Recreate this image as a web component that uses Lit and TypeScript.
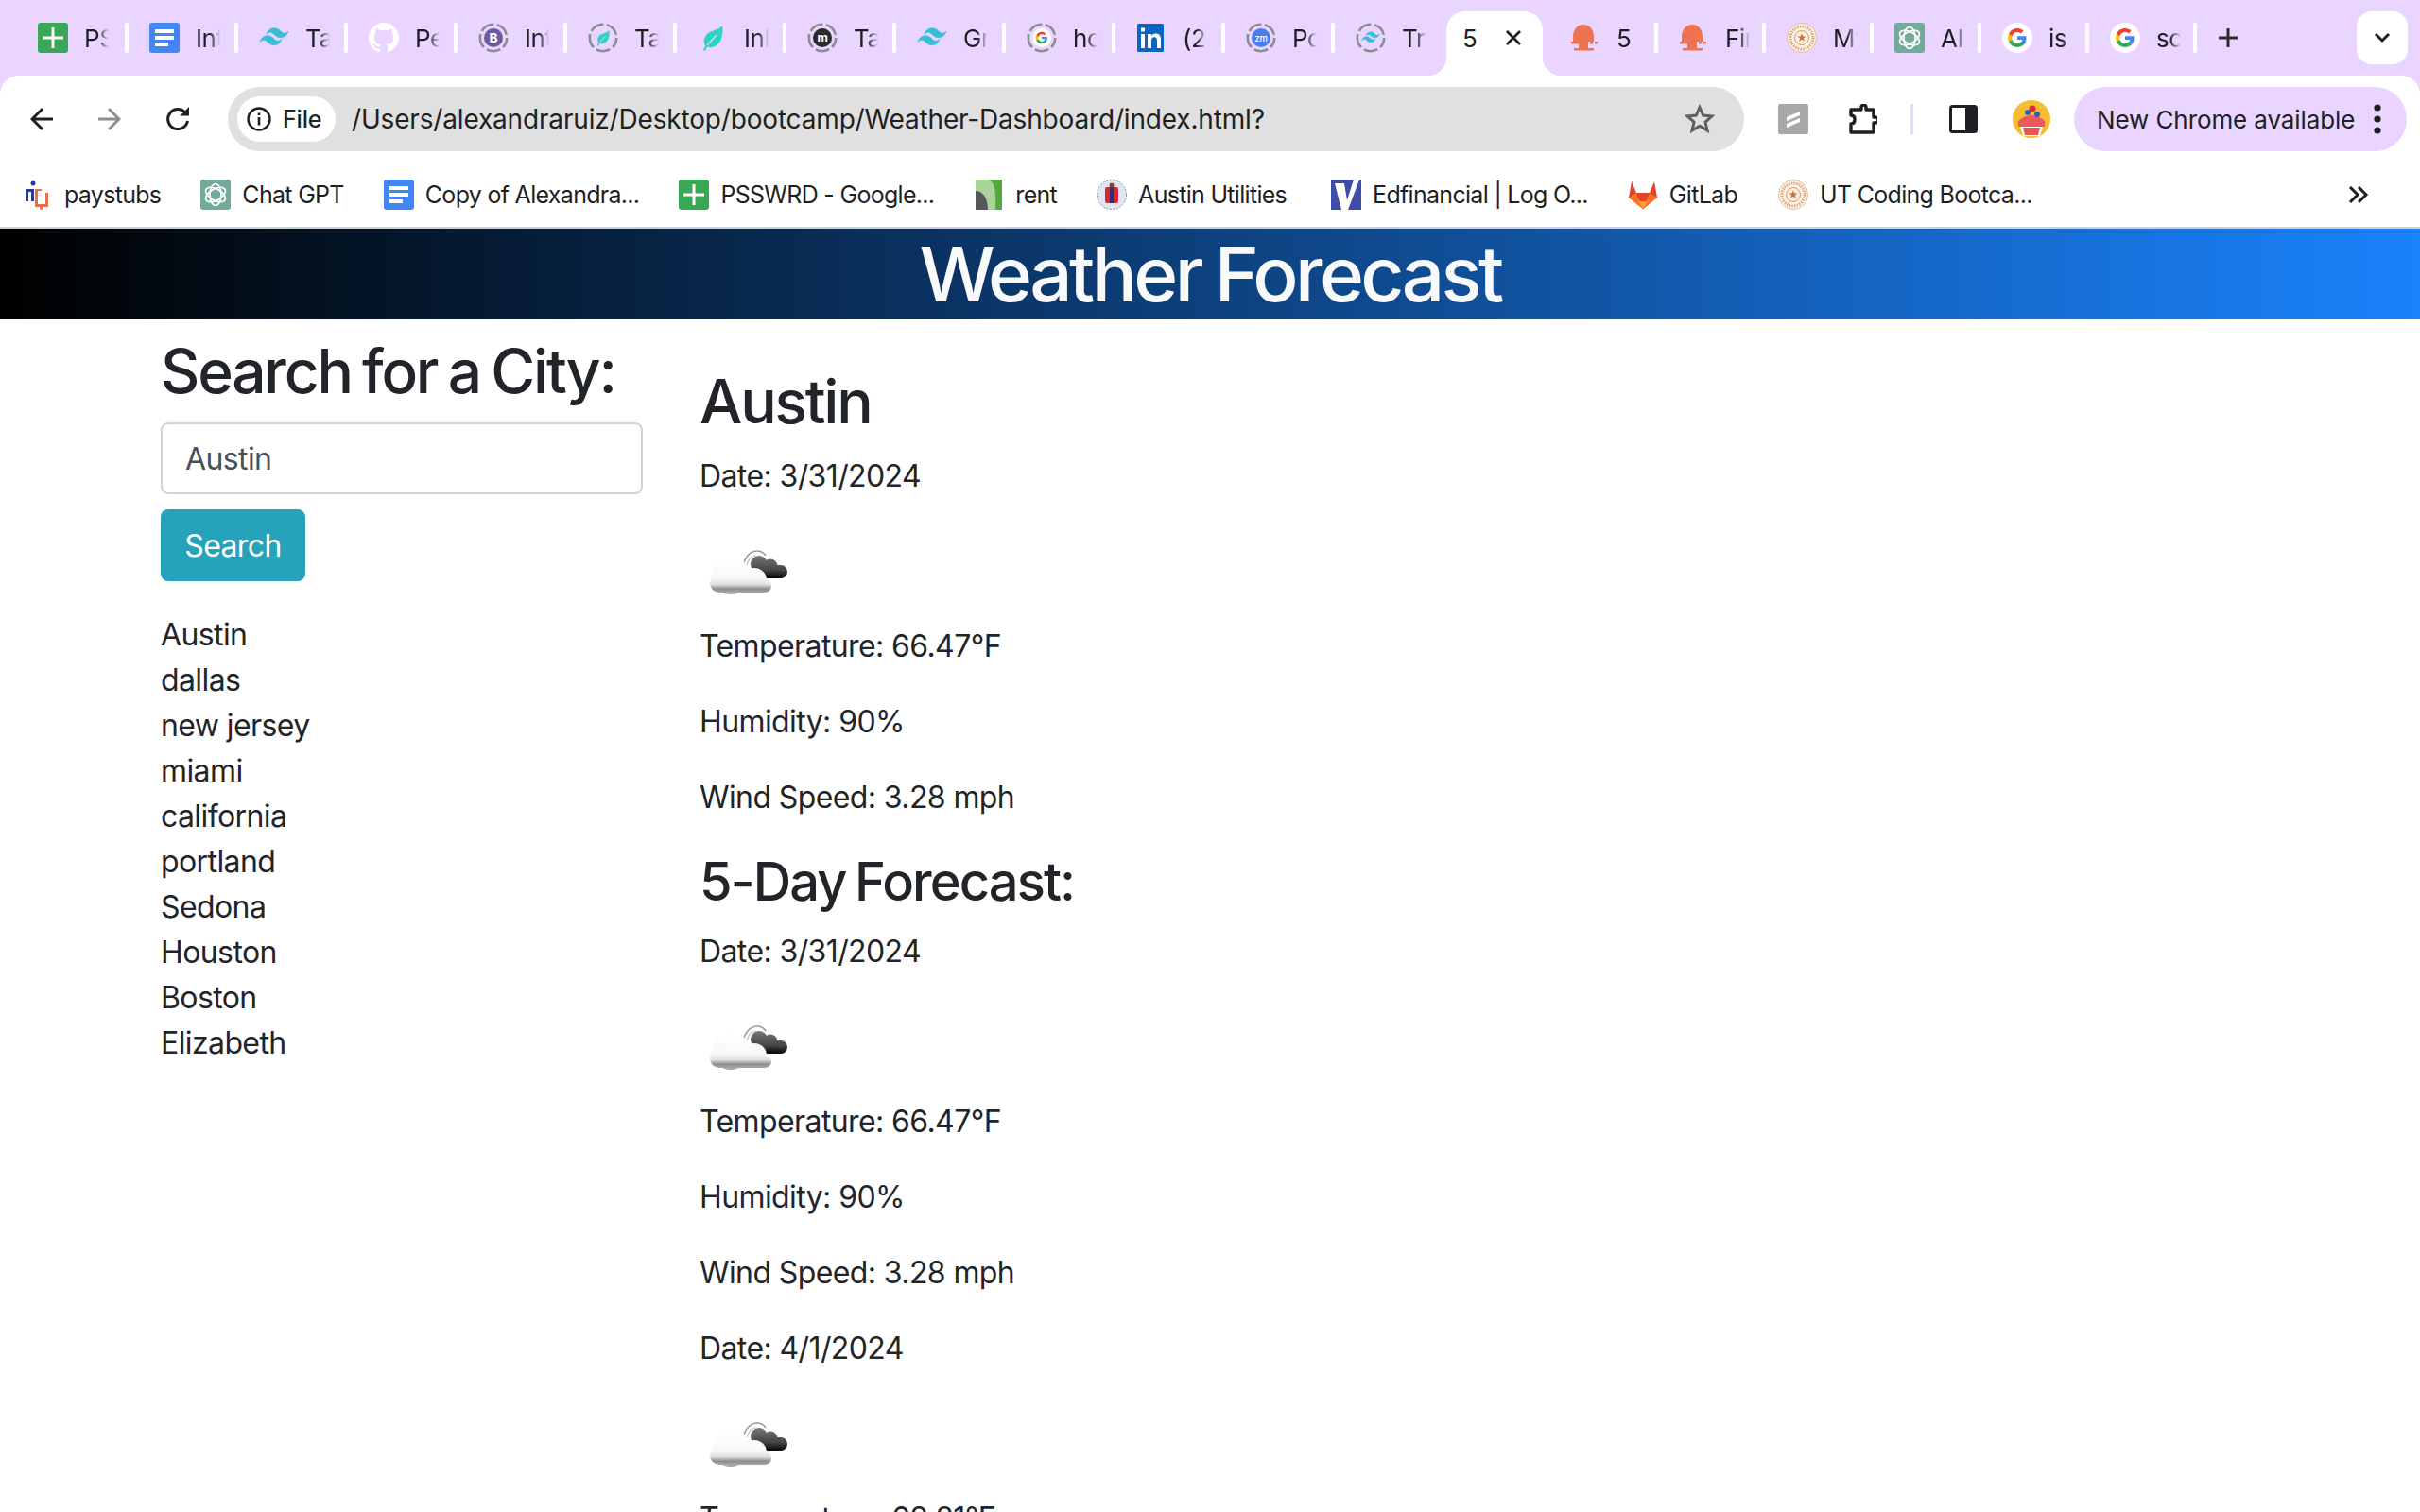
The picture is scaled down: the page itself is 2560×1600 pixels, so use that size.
import { LitElement, html, css, svg } from 'lit';
import { customElement } from 'lit/decorators.js';

const GITHUB = 'M8 0C3.58 0 0 3.58 0 8c0 3.54 2.29 6.53 5.47 7.59.4.07.55-.17.55-.38 0-.19-.01-.82-.01-1.49-2.01.37-2.53-.49-2.69-.94-.09-.23-.48-.94-.82-1.13-.28-.15-.68-.52-.01-.53.63-.01 1.08.58 1.23.82.72 1.21 1.87.87 2.33.66.07-.52.28-.87.51-1.07-1.78-.2-3.64-.89-3.64-3.95 0-.87.31-1.59.82-2.15-.08-.2-.36-1.02.08-2.12 0 0 .67-.21 2.2.82.64-.18 1.32-.27 2-.27s1.36.09 2 .27c1.53-1.04 2.2-.82 2.2-.82.44 1.1.16 1.92.08 2.12.51.56.82 1.27.82 2.15 0 3.07-1.87 3.75-3.65 3.95.29.25.54.73.54 1.48 0 1.07-.01 1.93-.01 2.2 0 .21.15.46.55.38A8.01 8.01 0 0016 8c0-4.42-3.58-8-8-8z';
const WAVE = 'M8 12.500c1.300-4.500 4-6.700 8-6.700 6 0 6.700 4.500 9.700 5.300 2 .5 3.800-.2 5.300-2.100-1.300 4.500-4 6.700-8 6.700-6 0-6.700-4.500-9.700-5.300-2-.5-3.800.2-5.300 2.100zM1 20.500c1.300-4.500 4-6.700 8-6.700 6 0 6.700 4.500 9.700 5.300 2 .5 3.800-.2 5.300-2.100-1.300 4.500-4 6.700-8 6.700-6 0-6.700-4.500-9.700-5.300-2-.5-3.800.2-5.300 2.100z';
const LEAF = 'M26 3c1.500 9-.5 17-6 21-3 2.200-7 2.700-10 1.500L8 30l-2-1 2.300-4.800C5 20 7 13 13 10c5-2.500 10-3 13-7z';

const box = (inner: unknown) => html`<svg class="ico" viewBox="0 0 32 32">${inner}</svg>`;
// sleeping tabs get a dashed grey ring round a smaller favicon
const ring = (inner: unknown) => box(svg`
  <circle cx="16" cy="16" r="14.200" fill="none" stroke="#8b8b90" stroke-width="2.600" stroke-dasharray="15 3.600" stroke-dashoffset="4"/>
  <g transform="translate(6 6) scale(.625)">${inner}</g>`);

const sheetsArt = svg`<rect x="0" width="32" height="32" rx="3" fill="#3aa757"/><path d="M14.500 5h3v9.500H27v3h-9.500V27h-3v-9.500H5v-3h9.500z" fill="#fff"/>`;
const docsArt = svg`<rect width="32" height="32" rx="3" fill="#4285f4"/><path d="M6 7h20v4H6zM6 14h20v4H6zM6 21h14v4H6z" fill="#fff"/>`;
const windArt = svg`<path d=${WAVE} fill="#38bdd8" stroke="#38bdd8" stroke-width=".6"/>`;
const leafArt = svg`<path d=${LEAF} fill="#2dd4c4"/><path d="M10 24l10-11" stroke="#e9d5ff" stroke-width="1.200"/>`;
const googleArt = svg`
  <circle cx="16" cy="16" r="16" fill="#fff"/>
  <path d="M25.500 16.300c0-.7-.1-1.400-.2-2H16v3.800h5.400c-.2 1.200-.9 2.300-2 3v2.500h3.200c1.800-1.700 2.900-4.200 2.900-7.300z" fill="#4285f4"/>
  <path d="M16 26c2.700 0 4.900-.9 6.600-2.400l-3.200-2.500c-.9.600-2 1-3.400 1-2.600 0-4.800-1.800-5.600-4.100H7.100v2.600C8.700 23.800 12.100 26 16 26z" fill="#34a853"/>
  <path d="M10.400 18c-.4-1.200-.4-2.600 0-3.800v-2.600H7.100c-1.400 2.800-1.400 6.200 0 9z" fill="#fbbc05"/>
  <path d="M16 9.900c1.500 0 2.800.5 3.800 1.500l2.800-2.800C20.900 7 18.700 6 16 6c-3.900 0-7.300 2.200-8.900 5.600l3.300 2.600c.8-2.400 3-4.300 5.600-4.300z" fill="#ea4335"/>`;
const gptArt = svg`
  <rect width="32" height="32" rx="3" fill="#74aa9c"/>
  <g fill="none" stroke="#fff" stroke-width="1.700">
    <ellipse cx="16" cy="16" rx="6" ry="11.500"/>
    <ellipse cx="16" cy="16" rx="6" ry="11.500" transform="rotate(60 16 16)"/>
    <ellipse cx="16" cy="16" rx="6" ry="11.500" transform="rotate(120 16 16)"/>
  </g>`;
const sealArt = svg`
  <circle cx="16" cy="16" r="15.500" fill="#fdf3e7" stroke="#e0bd9b" stroke-width="1"/>
  <circle cx="16" cy="16" r="12" fill="none" stroke="#d8a77c" stroke-width="3" stroke-dasharray="1.500 1.200"/>
  <circle cx="16" cy="16" r="7.500" fill="#fbeee0" stroke="#cf9a6e"/>
  <path d="M16 11.500l1.300 3h3.200l-2.600 2 1 3.200-2.900-1.900-2.900 1.900 1-3.200-2.600-2h3.200z" fill="#c8733c"/>`;
const bellArt = svg`
  <path d="M14 2c7 0 11 6 11 13v5H3v-5C3 8 7 2 14 2z" fill="#ee7350"/>
  <path d="M1 20h18v2.500H1zM21 20h3v2.500h-3zM26 20h3v2.500h-3zM9 22.500h10V27h6v2.500H4V27h5z" fill="#ee7350"/>`;
const linkedinArt = svg`
  <rect x="1" y="1" width="28" height="30" rx="1.500" fill="#0a66c2"/>
  <path d="M5 12h4v15H5zM5 5.500h4v4H5zM12 12h4v2c1-1.500 2.500-2.400 4.500-2.400 4 0 5.500 2.600 5.500 6.400v9h-4v-8c0-2.300-.7-3.800-2.800-3.800-2 0-3.200 1.500-3.200 3.800v8h-4z" fill="#fff"/>`;
const bootstrapArt = svg`
  <circle cx="16" cy="16" r="16" fill="#6f5a9f"/>
  <text x="16" y="24" text-anchor="middle" font-family="Inter, sans-serif" font-size="22" font-weight="700" fill="#fff">B</text>`;
const miroArt = svg`
  <circle cx="16" cy="16" r="16" fill="#2a2a30"/>
  <text x="16" y="23" text-anchor="middle" font-family="Inter, sans-serif" font-size="20" font-weight="700" fill="#fff">m</text>`;
const zoomArt = svg`
  <circle cx="16" cy="16" r="16" fill="#4a7df0"/>
  <text x="16" y="22" text-anchor="middle" font-family="Inter, sans-serif" font-size="15" font-weight="500" fill="#fff">zm</text>`;

interface Tab { label: string; icon: unknown; w: number; pad?: number; sep?: boolean; }

const TABS_LEFT: Tab[] = [
  { label: 'PSSWRD', icon: box(sheetsArt), w: 116, pad: 20, sep: true },
  { label: 'Interview', icon: box(docsArt), w: 116, sep: true },
  { label: 'Tailwind', icon: box(windArt), w: 116, sep: true },
  { label: 'Pets', icon: box(svg`<path transform="scale(2)" d=${GITHUB} fill="#fff"/>`), w: 116, sep: true },
  { label: 'Intro', icon: ring(bootstrapArt), w: 116, sep: true },
  { label: 'Tailwind', icon: ring(leafArt), w: 116, sep: true },
  { label: 'Inbox', icon: box(leafArt), w: 116, sep: true },
  { label: 'Tasks', icon: ring(miroArt), w: 116, sep: true },
  { label: 'Grid', icon: box(windArt), w: 116, sep: true },
  { label: 'how', icon: ring(googleArt), w: 116, sep: true },
  { label: '(2)', icon: box(linkedinArt), w: 116, sep: true },
  { label: 'Portal', icon: ring(zoomArt), w: 116, sep: true },
  { label: 'Tr', icon: ring(windArt), w: 118 },
];

const TABS_RIGHT: Tab[] = [
  { label: '5', icon: box(bellArt), w: 122, pad: 29, sep: true },
  { label: 'Find', icon: box(bellArt), w: 114, sep: true },
  { label: 'MyUT', icon: box(sealArt), w: 114, sep: true },
  { label: 'AI', icon: box(gptArt), w: 114, sep: true },
  { label: 'is', icon: box(googleArt), w: 114, sep: true },
  { label: 'sc', icon: box(googleArt), w: 114, sep: true },
];

const payIcon = box(svg`
  <circle cx="11" cy="4" r="2.500" fill="#2438a8"/>
  <path d="M3 10h9v13H9V13H6v10H3z" fill="#2438a8"/>
  <path d="M13 10h7v2h-4v14h8V14h3v15H13z" fill="#ee6a4d"/>
  <circle cx="20" cy="30" r="2" fill="#ee6a4d"/>`);
const rentIcon = box(svg`
  <rect x="2" width="28" height="32" fill="#55a83f"/>
  <path d="M2 0h14c6 2 8 14 7 32H2z" fill="#a9d49a"/>
  <path d="M2 12c8 0 13 8 13 20H2z" fill="#55585a"/>`);
const austinIcon = box(svg`
  <circle cx="16" cy="16" r="15.500" fill="#dfe6ee" stroke="#7d93ad" stroke-dasharray="2 1.500"/>
  <rect x="9" y="8" width="14" height="17" rx="2" fill="#d6263c"/>
  <path d="M14 8h4v17h-4z" fill="#27346e"/>
  <circle cx="16" cy="6" r="2.500" fill="#7a4a2a"/>`);
const edIcon = box(svg`
  <rect width="32" height="32" fill="#3f4da8"/>
  <path d="M4 4h10l3 18 7-22h6L18 32h-7z" fill="#fff"/>`);
const gitlabIcon = box(svg`
  <path d="M16 31L1 19 4 2l5 12h14l5-12 3 17z" fill="#e24329"/>
  <path d="M16 31L1 19l8-5z M16 31l15-12-8-5z" fill="#fc6d26"/>
  <path d="M16 31l-7-17h14z" fill="#e24329"/>
  <path d="M16 31l-5-8h10z" fill="#fca326"/>`);

const BOOKMARKS = [
  { label: 'paystubs', icon: payIcon, gap: 42 },
  { label: 'Chat GPT', icon: box(gptArt), gap: 42 },
  { label: 'Copy of Alexandra...', icon: box(docsArt), gap: 42 },
  { label: 'PSSWRD - Google...', icon: box(sheetsArt), gap: 42 },
  { label: 'rent', icon: rentIcon, gap: 42 },
  { label: 'Austin Utilities', icon: austinIcon, gap: 47 },
  { label: 'Edfinancial | Log O...', icon: edIcon, gap: 42 },
  { label: 'GitLab', icon: gitlabIcon, gap: 43 },
  { label: 'UT Coding Bootca...', icon: box(sealArt), gap: 0 },
];

const CITIES = ['Austin', 'dallas', 'new jersey', 'miami', 'california', 'portland', 'Sedona', 'Houston', 'Boston', 'Elizabeth'];

const FORECAST = [
  { date: '3/31/2024', temp: '66.47', humidity: '90', wind: '3.28' },
  { date: '4/1/2024', temp: '68.21', humidity: '', wind: '' },
];

const cloud = html`
  <svg class="cloud" viewBox="0 0 100 100">
    <defs>
      <linearGradient id="cw" gradientUnits="userSpaceOnUse" x1="0" y1="29" x2="0" y2="67">
        <stop offset="0" stop-color="#fff"/>
        <stop offset=".6" stop-color="#f8f8f8"/>
        <stop offset=".78" stop-color="#dedede"/>
        <stop offset=".9" stop-color="#8c8c8c"/>
        <stop offset="1" stop-color="#a8a8a8"/>
      </linearGradient>
      <linearGradient id="cd" gradientUnits="userSpaceOnUse" x1="0" y1="28" x2="0" y2="52">
        <stop offset="0" stop-color="#777"/>
        <stop offset=".65" stop-color="#444"/>
        <stop offset="1" stop-color="#050505"/>
      </linearGradient>
      <filter id="soft"><feGaussianBlur stdDeviation=".6"/></filter>
    </defs>
    <g filter="url(#soft)">
      <path d="M46 39c2-10 8-16 15-16 4 0 7 2 9 5" fill="none" stroke="#9c9c9c" stroke-width="1.700"/>
      <path d="M50 38c2-7 6-10 10-10" fill="none" stroke="#bbb" stroke-width="1.200"/>
      <g fill="url(#cd)">
        <circle cx="63" cy="37" r="9"/>
        <circle cx="75" cy="39" r="7.500"/>
        <circle cx="86" cy="45" r="7"/>
        <path d="M56 38h30v14H66c-3 0-6-4-10-8z"/>
      </g>
      <g fill="url(#cw)">
        <circle cx="33" cy="49" r="20"/>
        <circle cx="21" cy="57" r="10"/>
        <circle cx="58" cy="54" r="13"/>
        <circle cx="69" cy="60" r="7"/>
        <path d="M20 47h49v20H20z"/>
      </g>
    </g>
  </svg>`;

@customElement('app-root')
export class AppRoot extends LitElement {
  static styles = css`
    :host {
      display: block;
      height: 1600px;
      overflow: hidden;
      background: #fff;
      color: #212529;
      font-family: Inter, "Liberation Sans", sans-serif;
    }

    .ico { width: 32px; height: 32px; flex: none; display: block; }

    /* tab strip */
    .chrome { background: #e9d5ff; }
    .tabstrip {
      height: 80px;
      padding-left: 20px;
      display: flex;
      align-items: center;
      color: #1f1f23;
      font-size: 26px;
      letter-spacing: -0.4px;
    }
    .tab {
      flex: none;
      display: flex;
      align-items: center;
      box-sizing: border-box;
      height: 32px;
    }
    .tab .name {
      margin-left: 17px;
      width: 26px;
      overflow: hidden;
      white-space: nowrap;
      -webkit-mask-image: linear-gradient(90deg, #000 55%, transparent);
      mask-image: linear-gradient(90deg, #000 55%, transparent);
    }
    .tab .sep {
      margin-left: auto;
      width: 4px;
      height: 32px;
      border-radius: 2px;
      background: #fff;
    }
    .active {
      flex: none;
      position: relative;
      box-sizing: border-box;
      align-self: flex-end;
      width: 102px;
      height: 68px;
      padding: 0 22px 12px 17px;
      display: flex;
      align-items: center;
      justify-content: space-between;
      background: #fff;
      border-radius: 20px 20px 0 0;
    }
    .active::before,
    .active::after {
      content: '';
      position: absolute;
      bottom: 0;
      width: 20px;
      height: 20px;
    }
    .active::before { left: -20px; background: radial-gradient(circle at 0 0, transparent 20px, #fff 20.500px); }
    .active::after { right: -20px; background: radial-gradient(circle at 100% 0, transparent 20px, #fff 20.500px); }
    .close { width: 18px; height: 18px; }
    .plus { width: 22px; height: 22px; margin-left: 22px; }
    .more {
      margin-left: auto;
      margin-right: 13px;
      width: 54px;
      height: 56px;
      align-self: flex-start;
      margin-top: 12px;
      display: flex;
      align-items: center;
      justify-content: center;
      background: #fff;
      border-radius: 16px;
    }

    /* toolbar */
    .toolbar {
      height: 92px;
      box-sizing: border-box;
      padding: 12px 13px 12px 32px;
      display: flex;
      align-items: flex-start;
      background: #fff;
      border-radius: 20px 20px 0 0;
    }
    .nav { width: 24px; height: 68px; display: block; flex: none; }
    .nav-gap { margin-left: 48px; }
    .omni {
      flex: none;
      box-sizing: border-box;
      margin-left: 41px;
      width: 1604px;
      height: 68px;
      padding: 0 31px 0 10px;
      display: flex;
      align-items: center;
      background: #e0e0e0;
      border-radius: 34px;
      font-size: 28px;
      letter-spacing: -0.17px;
    }
    .chip {
      flex: none;
      box-sizing: border-box;
      width: 104px;
      height: 48px;
      display: flex;
      align-items: center;
      gap: 12px;
      padding-left: 10px;
      background: #fff;
      border-radius: 24px;
      font-size: 25px;
      font-weight: 500;
    }
    .url { margin-left: 17px; white-space: nowrap; flex: 1; color: #1f1f1f; }
    .tools { display: flex; align-items: center; height: 68px; }
    .divider { width: 3px; height: 32px; margin: 0 37px 0 35px; background: #e9d5ff; }
    .update {
      box-sizing: border-box;
      width: 352px;
      height: 68px;
      margin-left: 25px;
      padding: 0 0 0 24px;
      display: flex;
      align-items: center;
      gap: 20px;
      background: #e9d5ff;
      border-radius: 34px;
      color: #1f1f23;
      font-size: 26px;
      letter-spacing: -0.1px;
      white-space: nowrap;
    }

    /* bookmarks */
    .bookmarks {
      height: 70px;
      box-sizing: border-box;
      padding: 0 54px 0 24px;
      display: flex;
      align-items: center;
      background: #fff;
      border-bottom: 2px solid #cfcfd2;
      font-size: 25px;
      letter-spacing: -0.7px;
      color: #1f1f23;
    }
    .mark { display: flex; align-items: center; gap: 12px; white-space: nowrap; flex: none; }
    .chev { margin-left: auto; width: 24px; height: 24px; }

    /* page */
    .banner {
      height: 96px;
      display: flex;
      align-items: center;
      justify-content: center;
      background: linear-gradient(90deg, #000, #1a82fb);
      color: #f8f9fa;
      font-size: 80px;
      font-weight: 500;
      letter-spacing: -3.600px;
      word-spacing: -3px;
      line-height: 102px;
    }
    .page {
      padding: 0 170px;
      display: grid;
      grid-template-columns: 510px 1fr;
      column-gap: 60px;
      font-size: 32px;
      line-height: 48px;
      letter-spacing: -0.6px;
    }
    h2, h3 { margin: 0 0 16px; font-weight: 500; line-height: 1.200; word-spacing: -3.500px; }
    h2 { font-size: 64px; letter-spacing: -2.200px; }
    h3 { font-size: 56px; letter-spacing: -1.900px; }
    p { margin: 0 0 32px; }
    .side { padding-top: 17px; }
    .side h2 { margin-bottom: 15px; }
    .field {
      box-sizing: border-box;
      width: 510px;
      height: 76px;
      padding: 2px 24px 0;
      display: block;
      background: #fff;
      border: 2px solid #ced4da;
      border-radius: 8px;
      color: #495057;
      font: inherit;
      letter-spacing: inherit;
    }
    .go {
      display: block;
      margin-top: 16px;
      width: 153px;
      height: 76px;
      padding: 2px 0 0;
      border: 0;
      border-radius: 8px;
      background: #26a3ba;
      color: #fff;
      font: inherit;
      letter-spacing: inherit;
    }
    .cities { margin: 33px 0 0; padding: 0; list-style: none; }
    .main { padding-top: 49px; }
    .cloud { display: block; width: 100px; height: 100px; }
  `;

  renderTab (t: Tab) {
    return html`
      <div class="tab" style="width:${t.w}px;padding-left:${t.pad ?? 22}px">
        ${t.icon}
        <span class="name">${t.label}</span>
        ${t.sep ? html`<span class="sep"></span>` : ''}
      </div>`;
  }

  renderDay (d: typeof FORECAST[number]) {
    return html`
      <p>Date: ${d.date}</p>
      ${cloud}
      <p>Temperature: ${d.temp}°F</p>
      ${d.humidity ? html`<p>Humidity: ${d.humidity}%</p><p>Wind Speed: ${d.wind} mph</p>` : ''}`;
  }

  render () {
    return html`
      <div class="chrome">
        <div class="tabstrip">
          ${TABS_LEFT.map(t => this.renderTab(t))}
          <div class="active">
            <span>5</span>
            <svg class="close" viewBox="0 0 18 18"><path d="M2 2l14 14M16 2L2 16" stroke="#1f1f23" stroke-width="2.800"/></svg>
          </div>
          ${TABS_RIGHT.map(t => this.renderTab(t))}
          <svg class="plus" viewBox="0 0 22 22"><path d="M11 1v20M1 11h20" stroke="#2a2a30" stroke-width="3"/></svg>
          <div class="more">
            <svg width="18" height="12" viewBox="0 0 18 12"><path d="M2 2l7 7 7-7" fill="none" stroke="#1f1f23" stroke-width="3"/></svg>
          </div>
        </div>

        <div class="toolbar">
          <svg class="nav" viewBox="0 0 24 68"><path d="M24 34H3M13 23L2 34l11 11" fill="none" stroke="#1f1f23" stroke-width="3"/></svg>
          <svg class="nav nav-gap" viewBox="0 0 24 68"><path d="M0 34h21M11 23l11 11-11 11" fill="none" stroke="#8e8e90" stroke-width="3"/></svg>
          <svg class="nav nav-gap" viewBox="0 0 24 68"><path d="M22.500 36a10.500 10.500 0 1 1-3-9.500" fill="none" stroke="#1f1f23" stroke-width="3"/><path d="M24 21v9.500h-9.500z" fill="#1f1f23"/></svg>
          <div class="omni">
            <div class="chip">
              <svg width="26" height="26" viewBox="0 0 26 26">
                <circle cx="13" cy="13" r="11.500" fill="none" stroke="#1f1f1f" stroke-width="2.400"/>
                <path d="M11.700 11h2.600v8.500h-2.600zM11.700 6.500h2.600v2.600h-2.600z" fill="#1f1f1f"/>
              </svg>
              File
            </div>
            <span class="url">/Users/alexandraruiz/Desktop/bootcamp/Weather-Dashboard/index.html?</span>
            <svg width="32" height="32" viewBox="0 0 32 32"><path d="M16 3.500l3.700 8.600 9.300.8-7 6.100 2.100 9.100-8.100-4.800-8.100 4.800 2.100-9.100-7-6.100 9.300-.8z" fill="none" stroke="#5f6063" stroke-width="3"/></svg>
          </div>
          <div class="tools">
            <svg class="ico" style="margin-left:36px" viewBox="0 0 32 32"><rect width="32" height="32" rx="2" fill="#a8a8a8"/><path d="M9 14l14-6v4L9 18zM9 21l14-6v4L9 25z" fill="#fff"/></svg>
            <svg class="ico" style="margin-left:41px" viewBox="0 0 32 32"><path d="M11 6h4V3.500a2.500 2.500 0 0 1 5 0V6h8v8h2a3 3 0 0 1 0 6h-2v10H4v-9c3 0 4-2 4-4.500S7 12 4 12V6z" fill="none" stroke="#1f1f23" stroke-width="3.400" stroke-linejoin="round"/></svg>
            <span class="divider"></span>
            <svg class="ico" viewBox="0 0 32 32"><rect x="2.500" y="2.500" width="27" height="27" rx="2" fill="#fff" stroke="#1f1f23" stroke-width="3"/><rect x="18" y="2" width="12" height="28" fill="#1f1f23"/></svg>
            <svg style="margin-left:36px;flex:none" width="40" height="40" viewBox="0 0 40 40">
              <circle cx="20" cy="20" r="20" fill="#f5bd2f"/>
              <path d="M6 22c8-8 20-8 28 0v6H6z" fill="#ea5a5c"/>
              <path d="M8 28h24l-3 10H11z" fill="#fff"/>
              <path d="M11 29h18l-2 8H13z" fill="#e8574f"/>
              <circle cx="16" cy="13" r="3" fill="#2f5fc4"/><circle cx="26" cy="15" r="3" fill="#2f5fc4"/><circle cx="21" cy="9" r="3.500" fill="#d92d3a"/>
            </svg>
            <div class="update">
              New Chrome available
              <svg width="8" height="32" viewBox="0 0 8 32"><circle cx="4" cy="4" r="3.600" fill="#1f1f23"/><circle cx="4" cy="16" r="3.600" fill="#1f1f23"/><circle cx="4" cy="28" r="3.600" fill="#1f1f23"/></svg>
            </div>
          </div>
        </div>

        <div class="bookmarks">
          ${BOOKMARKS.map(b => html`
            <div class="mark" style="margin-right:${b.gap}px">${b.icon}<span>${b.label}</span></div>`)}
          <svg class="chev" viewBox="0 0 24 24"><path d="M4 4l8 8-8 8M13 4l8 8-8 8" fill="none" stroke="#1f1f23" stroke-width="3"/></svg>
        </div>
      </div>

      <header class="banner">Weather Forecast</header>

      <div class="page">
        <section class="side">
          <h2>Search for a City:</h2>
          <input class="field" .value=${'Austin'} />
          <button class="go">Search</button>
          <ul class="cities">
            ${CITIES.map(c => html`<li>${c}</li>`)}
          </ul>
        </section>
        <section class="main">
          <h2>Austin</h2>
          ${this.renderDay(FORECAST[0])}
          <h3>5-Day Forecast:</h3>
          ${this.renderDay(FORECAST[0])}
          ${this.renderDay(FORECAST[1])}
        </section>
      </div>
    `;
  }
}
